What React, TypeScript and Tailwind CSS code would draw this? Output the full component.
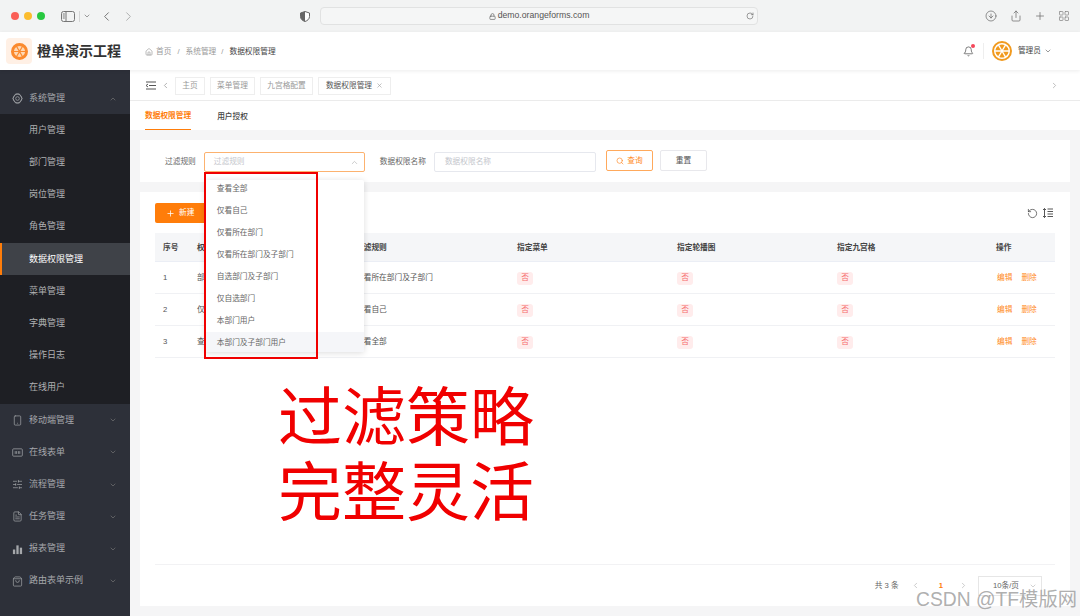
import React from 'react';
import {
  Bell, ChevronDown, ChevronLeft, ChevronRight, ChevronUp, CircleArrowDown, FileText, House, LayoutGrid,
  Lock, Plus, RotateCcw, RotateCw, Search, Share, ShoppingBag, SlidersHorizontal, Smartphone, X,
} from 'lucide-react';

const FONT = "font-['Liberation_Sans','Noto_Sans_CJK_SC',sans-serif]";

const Wheel: React.FC<{ size: number; ring: string; wedge: string; bg: string }> = ({ size, ring, wedge, bg }) => (
  <svg width={size} height={size} viewBox="0 0 24 24">
    <circle cx="12" cy="12" r="10.8" fill={bg} stroke={ring} strokeWidth="2.4" />
    {[0, 60, 120, 180, 240, 300].map((a) => (
      <path key={a} d="M12 10.4 L8.800 4.800 Q12 3.400 15.200 4.800 Z" fill={wedge} transform={`rotate(${a} 12 12)`} />
    ))}
  </svg>
);

const SystemIcon = () => (
  <svg width="11" height="11" viewBox="0 0 24 24" fill="none" stroke="currentColor" strokeWidth="1.6">
    <path d="M8 2h8l6 10-6 10H8L2 12z" strokeLinejoin="round" />
    <circle cx="12" cy="12" r="9.5" />
    <circle cx="12" cy="12" r="4" />
  </svg>
);

const FormIcon = () => (
  <svg width="11" height="11" viewBox="0 0 24 24" fill="none" stroke="currentColor" strokeWidth="1.6">
    <rect x="1.5" y="4" width="21" height="16" rx="2" />
    <path d="M7 9v6M10 9v6M14 9v6M17 9v6" />
  </svg>
);

const ChartIcon = () => (
  <svg width="11" height="11" viewBox="0 0 24 24" fill="currentColor">
    <rect x="2" y="12" width="5" height="10" />
    <rect x="9.5" y="3" width="5" height="19" />
    <rect x="17" y="8" width="5" height="14" />
  </svg>
);

const SortIcon = () => (
  <svg width="12" height="12" viewBox="0 0 24 24" fill="none" stroke="#444" strokeWidth="1.8">
    <path d="M5 3v18M2 6l3-3 3 3M2 18l3 3 3-3M11 4h11M11 9h11M11 14h11M11 19h11" />
  </svg>
);

const Browser = () => (
  <div className="flex h-[32px] shrink-0 items-center bg-[#f2f3f3] text-[#6e6e6e]">
    <div className="ml-[11px] flex gap-[5px]">
      <span className="h-[8px] w-[8px] rounded-full bg-[#fa5f57]" />
      <span className="h-[8px] w-[8px] rounded-full bg-[#fbbc2e]" />
      <span className="h-[8px] w-[8px] rounded-full bg-[#28c840]" />
    </div>
    <svg className="ml-[16px] shrink-0" width="14" height="11" viewBox="0 0 14 11" fill="none" stroke="#777" strokeWidth="1">
      <rect x="0.5" y="0.5" width="13" height="10" rx="2" />
      <path d="M5 0.5v10" />
      <path d="M1.8 3h2M1.8 5h2M1.8 7h2" />
    </svg>
    <span className="ml-[4px] h-[11px] w-px bg-[#d5d6d6]" />
    <ChevronDown size={8} strokeWidth={2} className="ml-[3px] shrink-0" />
    <ChevronLeft size={15} strokeWidth={1.5} className="ml-[8px] shrink-0" />
    <ChevronRight size={15} strokeWidth={1.5} className="ml-[7px] shrink-0 text-[#a9aaaa]" />
    <svg className="ml-[164px] shrink-0" width="10" height="11" viewBox="0 0 10 11">
      <path d="M5 .5 9.5 2v3.5c0 2.500-2 4.200-4.500 5C2.500 9.700.5 8 .5 5.500V2z" fill="#fff" stroke="#666" />
      <path d="M5 .5 .5 2v3.500C.5 8 2.500 9.700 5 10.500z" fill="#666" />
    </svg>
    <div className="relative ml-[10px] flex h-[18px] w-[438px] shrink-0 items-center justify-center rounded-[4px] border border-[#e1e2e2] bg-[#f5f6f6]">
      <Lock size={7} strokeWidth={2.5} className="mr-[2px]" />
      <span className={`${FONT} text-[8.7px] text-[#555]`}>demo.orangeforms.com</span>
      <RotateCw size={8} className="absolute right-[3px]" />
    </div>
    <CircleArrowDown size={12} strokeWidth={1.5} className="ml-[227px] shrink-0" />
    <Share size={12} strokeWidth={1.5} className="ml-[13px] shrink-0" />
    <Plus size={12} strokeWidth={1.5} className="ml-[12px] shrink-0" />
    <LayoutGrid size={12} strokeWidth={1.5} className="ml-[12px] shrink-0 text-[#888]" />
  </div>
);

const Header = () => (
  <div className="relative z-10 flex h-[38px] shrink-0 items-center bg-white shadow-[0_1px_4px_rgba(0,0,0,0.08)]">
    <div className="ml-[6px] flex h-[26px] w-[26px] items-center justify-center rounded-[4px] bg-[#fff0e5]">
      <Wheel size={17} ring="#fb8a2e" wedge="#ffd9b5" bg="#fb8a2e" />
    </div>
    <span className="ml-[5px] w-[108px] text-[14px] font-bold text-[#333]">橙单演示工程</span>
    <House size={8} className="mt-[1px] text-[#999]" />
    <span className="ml-[3px] mt-[1px] text-[7.7px] text-[#999]">首页</span>
    <span className="mx-[6px] mt-[1px] text-[7.7px] text-[#999]">/</span>
    <span className="mt-[1px] text-[7.7px] text-[#999]">系统管理</span>
    <span className="mx-[5px] mt-[1px] text-[7.7px] text-[#999]">/</span>
    <span className="ml-[1px] mt-[1px] text-[7.7px] text-[#444]">数据权限管理</span>
    <div className="relative ml-auto">
      <Bell size={11} strokeWidth={1.5} className="text-[#444]" />
      <span className="absolute right-[-1px] top-[-2px] h-[4px] w-[4px] rounded-full bg-[#f5475a]" />
    </div>
    <span className="ml-[9px] h-[16px] w-px bg-[#eee]" />
    <span className="ml-[8px]">
      <Wheel size={20} ring="#f19a1f" wedge="#f19a1f" bg="#fff" />
    </span>
    <span className="ml-[6px] text-[7.7px] text-[#444]">管理员</span>
    <ChevronDown size={8} className="ml-[3px] mr-[28px] text-[#666]" />
  </div>
);

const subMenu = ['用户管理', '部门管理', '岗位管理', '角色管理', '数据权限管理', '菜单管理', '字典管理', '操作日志', '在线用户'];

const topMenu: { label: string; icon: React.ReactNode }[] = [
  { label: '移动端管理', icon: <Smartphone size={11} strokeWidth={1.5} /> },
  { label: '在线表单', icon: <FormIcon /> },
  { label: '流程管理', icon: <SlidersHorizontal size={11} strokeWidth={1.5} /> },
  { label: '任务管理', icon: <FileText size={11} strokeWidth={1.5} /> },
  { label: '报表管理', icon: <ChartIcon /> },
  { label: '路由表单示例', icon: <ShoppingBag size={11} strokeWidth={1.5} /> },
];

const Sidebar = () => (
  <aside className="flex w-[130px] shrink-0 flex-col bg-[#2d3039] pt-[12px] text-[9px] text-[#a5a7ab]">
    <div className="flex h-[32px] items-center pl-[12px] pr-[13px] pt-[1px]">
      <SystemIcon />
      <span className="ml-[6px]">系统管理</span>
      <ChevronUp size={8} className="ml-auto text-[#777]" />
    </div>
    <div className="flex flex-col bg-[#1e1f24]">
      {subMenu.map((m) =>
        m === '数据权限管理' ? (
          <div key={m} className="flex h-[32.2px] items-center border-l-[2px] border-[#ff7d0a] bg-[#3f4248] pl-[27px] pt-[1px] text-white">{m}</div>
        ) : (
          <div key={m} className="flex h-[32.2px] items-center pl-[29px] pt-[1px] text-[#b0b1b3]">{m}</div>
        ),
      )}
    </div>
    {topMenu.map((m) => (
      <div key={m.label} className="flex h-[32.2px] items-center pl-[12px] pr-[13px] pt-[1px]">
        {m.icon}
        <span className="ml-[6px]">{m.label}</span>
        <ChevronDown size={8} className="ml-auto text-[#777]" />
      </div>
    ))}
  </aside>
);

const TagBar = () => (
  <div className="flex h-[31px] shrink-0 items-center border-b border-[#ebebeb] bg-white pt-[1px] text-[7.7px] text-[#999]">
    <svg className="ml-[16px]" width="10" height="9" viewBox="0 0 10 9" fill="none" stroke="#555" strokeWidth="1">
      <path d="M0 1h10M3 4.500h7M0 8h10M2 3 0 4.500 2 6" />
    </svg>
    <ChevronLeft size={9} className="ml-[5px]" />
    <span className="ml-[5px] flex h-[18px] w-[30px] items-center justify-center border border-[#eee]">主页</span>
    <span className="ml-[5px] flex h-[18px] w-[45px] items-center justify-center border border-[#eee]">菜单管理</span>
    <span className="ml-[5px] flex h-[18px] w-[53px] items-center justify-center border border-[#eee]">九宫格配置</span>
    <span className="ml-[5px] flex h-[18px] w-[73px] items-center justify-center gap-[4px] border border-[#eee] text-[#555]">
      数据权限管理 <X size={7} className="text-[#999]" />
    </span>
    <ChevronRight size={9} className="ml-auto mr-[21px] text-[#aaa]" />
  </div>
);

const Tabs = () => (
  <div className="flex h-[29px] shrink-0 items-stretch gap-[26px] bg-white pl-[15px] text-[7.7px]">
    <span className="flex items-center border-b-[1px] border-[#ff7d0a] pt-[2px] font-bold text-[#ff7d0a]">数据权限管理</span>
    <span className="flex items-center pt-[2px] font-medium text-[#444]">用户授权</span>
  </div>
);

const options = ['查看全部', '仅看自己', '仅看所在部门', '仅看所在部门及子部门', '自选部门及子部门', '仅自选部门', '本部门用户', '本部门及子部门用户'];

const FilterCard = () => (
  <div className="flex h-[42px] shrink-0 items-center bg-white pt-[2px] text-[7.7px] text-[#666]">
    <span className="ml-[25px]">过滤规则</span>
    <div className="relative ml-[8px] flex h-[20px] w-[161px] items-center rounded-[2px] border border-[#fcb26f] pl-[9px] text-[#c4c6cc]">
      过滤规则
      <ChevronUp size={9} className="absolute right-[5px] text-[#bbb]" />
      <div className="absolute left-[0px] top-[27px] z-20 h-[172px] w-[159px] overflow-hidden rounded-[2px] bg-white shadow-[0_1px_6px_rgba(0,0,0,0.14)]">
        <div className="mt-[-2px]">
          {options.map((o, i) => (
            <div key={o} className={`flex h-[22px] items-center pl-[12px] text-[#666] ${i === 7 ? 'bg-[#f5f6f9]' : ''}`}>{o}</div>
          ))}
        </div>
      </div>
    </div>
    <span className="ml-[15px]">数据权限名称</span>
    <div className="ml-[8px] flex h-[20px] w-[162px] items-center rounded-[2px] border border-[#e6e8ee] pl-[10px] text-[#c4c6cc]">数据权限名称</div>
    <div className="ml-[10px] mt-[-3px] flex h-[21px] w-[47px] items-center justify-center gap-[3px] rounded-[2px] border border-[#ffa95c] text-[#ff8a25]">
      <Search size={8} /> 查询
    </div>
    <div className="ml-[7px] mt-[-3px] flex h-[21px] w-[47px] items-center justify-center rounded-[2px] border border-[#e8e8ec] text-[#555]">重置</div>
  </div>
);

const rows = [
  { no: 1, name: '部门及子部门', rule: '仅看所在部门及子部门' },
  { no: 2, name: '仅看自己', rule: '仅看自己' },
  { no: 3, name: '查看全部', rule: '查看全部' },
];

const GRID = 'grid grid-cols-[34px_160px_160px_160px_160px_160px_66px] items-center';

const No = () => <span className="flex h-[13px] w-[16px] items-center justify-center rounded-[3px] bg-[#ffecec] text-[7.7px] text-[#f56c6c]">否</span>;

const TableCard = () => (
  <div className="mt-[10px] flex min-h-0 flex-1 flex-col bg-white px-[15px] pt-[11px]">
    <div className="flex h-[20px] shrink-0 items-center justify-between">
      <div className="flex h-[20px] w-[54px] items-center gap-[4px] rounded-[2px] bg-[#ff7d0a] pl-[11px] text-[7.7px] text-white">
        <Plus size={9} /> 新建
      </div>
      <div className="mr-[1px] flex items-center gap-[4px]">
        <RotateCcw size={11} strokeWidth={1.6} className="text-[#444]" />
        <SortIcon />
      </div>
    </div>
    <div className={`${GRID} mt-[10px] h-[29px] shrink-0 border-b border-[#ebeef5] bg-[#f5f6f8] pt-[1px] text-[7.7px] font-bold text-[#444]`}>
      <span className="pl-[8px]">序号</span>
      <span className="pl-[8px]">权限名称</span>
      <span className="pl-[7px]">过滤规则</span>
      <span className="pl-[8px]">指定菜单</span>
      <span className="pl-[8px]">指定轮播图</span>
      <span className="pl-[8px]">指定九宫格</span>
      <span className="pl-[7px]">操作</span>
    </div>
    {rows.map((r) => (
      <div key={r.no} className={`${GRID} h-[32px] shrink-0 border-b border-[#f0f1f4] pt-[1px] text-[7.7px] text-[#555]`}>
        <span className="pl-[8px]">{r.no}</span>
        <span className="pl-[8px]">{r.name}</span>
        <span className="pl-[7px]">{r.rule}</span>
        <span className="pl-[8px]"><No /></span>
        <span className="pl-[8px]"><No /></span>
        <span className="pl-[8px]"><No /></span>
        <span className="flex gap-[9px] pl-[8px] text-[#ff8a25]"><span>编辑</span><span>删除</span></span>
      </div>
    ))}
    <div className="flex-1 border-b border-[#f2f2f4]" />
    <div className="flex h-[41px] shrink-0 items-center text-[7.7px] text-[#666]">
      <span className="ml-auto">共 3 条</span>
      <ChevronLeft size={9} className="ml-[12px] text-[#bbb]" />
      <span className="ml-[19px] font-bold text-[#ff7d0a]">1</span>
      <ChevronRight size={9} className="ml-[16px] text-[#bbb]" />
      <div className="relative ml-[10px] mr-[13px] flex h-[20px] w-[64px] items-center justify-center border border-[#e6e6e6] pr-[8px]">
        10条/页
        <ChevronDown size={8} className="absolute right-[4px] text-[#bbb]" />
      </div>
    </div>
  </div>
);

export default function App() {
  return (
    <div className={`${FONT} relative flex h-[616px] w-[1080px] flex-col overflow-hidden bg-white`}>
      <Browser />
      <Header />
      <div className="flex min-h-0 flex-1">
        <Sidebar />
        <main className="flex min-w-0 flex-1 flex-col bg-[#f5f5f6]">
          <TagBar />
          <Tabs />
          <div className="flex min-h-0 flex-1 flex-col px-[10px] pb-[10px] pt-[10px]">
            <FilterCard />
            <TableCard />
          </div>
        </main>
      </div>
      {/* annotations drawn over the screenshot */}
      <div className="absolute left-[204px] top-[172px] z-30 h-[187px] w-[114px] border-[2px] border-[#f00000]" />
      <div className="absolute left-[278px] top-[381px] z-30 text-[64px] leading-[75px] text-[#f00000]">
        过滤策略
        <br />
        完整灵活
      </div>
      <div className="absolute left-[916px] top-[589px] z-30 text-[19.3px] leading-[22px] text-[#9a9a9a]/80">CSDN @TF模版网</div>
    </div>
  );
}
